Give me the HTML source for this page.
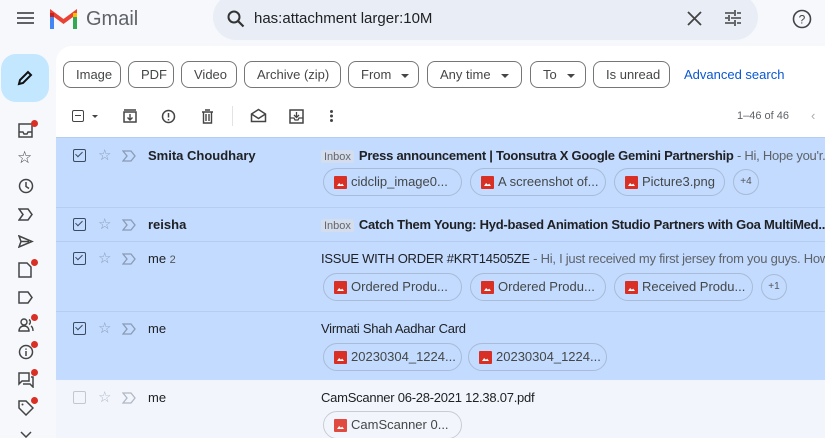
<!DOCTYPE html>
<html><head><meta charset="utf-8">
<style>
*{margin:0;padding:0;box-sizing:border-box}
body{width:825px;height:438px;overflow:hidden;background:#f6f8fc;font-family:"Liberation Sans",Arial,sans-serif;position:relative;color:#202124}
.a{position:absolute}
.chip{position:absolute;top:61px;height:27px;border:1px solid #747775;border-radius:8px;font-size:13px;color:#444746;line-height:25px;padding:0 12px;background:#fff;white-space:nowrap}
.chip .dd{display:inline-block;width:0;height:0;border-left:4px solid transparent;border-right:4px solid transparent;border-top:4px solid #444746;margin-left:10px;vertical-align:middle}
.row{position:absolute;left:56px;width:769px;background:#c2dbff;border-top:1px solid #b5cdf0;overflow:hidden}
.cb{position:absolute;left:17px;width:13px;height:13px;border:1.6px solid #3c4a5e;border-radius:2px}
.cb.on::after{content:"";position:absolute;left:3px;top:0px;width:3px;height:6px;border:solid #3c4a5e;border-width:0 1.5px 1.5px 0;transform:rotate(45deg)}
.star{position:absolute;left:42px;font-size:15px;color:#8a9bb5}
.imp{position:absolute;left:66px}
.snd{position:absolute;left:92px;font-size:13px}
.sub{position:absolute;left:265px;width:504px;overflow:hidden;font-size:13px;letter-spacing:-0.25px;white-space:nowrap}
.inb{color:#666;font-size:11px;padding:1px 3px;border-radius:3px;margin-right:5px;background:#d3dded;letter-spacing:0}
.att{position:absolute;height:28px;border:1px solid #a9bbd6;border-radius:14px;font-size:13px;color:#444746;line-height:26px;padding-left:27px;white-space:nowrap}
.att i{position:absolute;left:10px;top:7px;width:13px;height:13px;background:#d93025;border-radius:1px}
.att i::after{content:"";position:absolute;left:3px;bottom:3px;width:7px;height:3px;background:#fff;clip-path:polygon(0 100%,30% 0,55% 60%,75% 20%,100% 100%)}
.plus{position:absolute;width:26px;height:26px;border:1px solid #a9bbd6;border-radius:50%;font-size:10px;color:#555;text-align:center;line-height:24px}
.dot{position:absolute;width:7px;height:7px;background:#d93025;border-radius:50%}
.si{position:absolute;left:18px}
</style></head><body>
<div class="a" style="left:17px;top:12px;width:17px;height:2px;background:#5f6368;box-shadow:0 5px 0 #5f6368,0 10px 0 #5f6368"></div>
<svg class="a" style="left:50px;top:9px" width="27" height="20" viewBox="0 0 27 20"><path d="M2 20V4l11.5 8.5L25 4v16" fill="none" stroke="#ea4335" stroke-width="4"/><path d="M2 4v16" stroke="#4285f4" stroke-width="4"/><path d="M25 4v16" stroke="#34a853" stroke-width="4"/><path d="M25 4l0 4" stroke="#fbbc04" stroke-width="4"/><path d="M2 4l0 4" stroke="#c5221f" stroke-width="4"/></svg>
<div class="a" style="left:86px;top:8px;font-size:20px;color:#5f6368">Gmail</div>
<div class="a" style="left:213px;top:-6px;width:545px;height:46px;background:#e9eef6;border-radius:24px"></div>
<svg class="a" style="left:227px;top:10px" width="18" height="18" viewBox="0 0 18 18"><circle cx="7" cy="7" r="5.5" fill="none" stroke="#333" stroke-width="2"/><path d="M11 11l5.5 5.5" stroke="#333" stroke-width="2.2"/></svg>
<div class="a" style="left:254px;top:10px;font-size:15px;color:#202124">has:attachment larger:10M</div>
<svg class="a" style="left:687px;top:11px" width="15" height="15"><path d="M1 1l13 13M14 1L1 14" stroke="#444" stroke-width="1.8"/></svg>
<svg class="a" style="left:724px;top:10px" width="18" height="16"><path d="M1 3h9M13 3h4M1 8h3M7 8h10M1 13h9M13 13h4M11 0v6M5 5v6M11 10v6" stroke="#444" stroke-width="1.6"/></svg>
<svg class="a" style="left:792px;top:9px" width="20" height="20"><circle cx="10" cy="10" r="8.5" fill="none" stroke="#444" stroke-width="1.6"/><text x="10" y="14.5" font-size="12" text-anchor="middle" fill="#444" font-family="Liberation Sans">?</text></svg>
<div class="a" style="left:1px;top:54px;width:48px;height:48px;background:#c2e7ff;border-radius:15px"></div>
<svg class="a" style="left:17px;top:70px" width="16" height="16"><path d="M2 14l1-4 8-8 3 3-8 8z" fill="none" stroke="#111" stroke-width="2"/></svg>
<div class="a" style="left:56px;top:46px;width:769px;height:392px;background:#fff;border-radius:16px 0 0 0"></div>
<div class="chip" style="left:63px;width:58px">Image</div>
<div class="chip" style="left:128px;width:46px">PDF</div>
<div class="chip" style="left:181px;width:56px">Video</div>
<div class="chip" style="left:244px;width:97px">Archive (zip)</div>
<div class="chip" style="left:348px;width:71px">From<span class="dd"></span></div>
<div class="chip" style="left:427px;width:95px">Any time<span class="dd"></span></div>
<div class="chip" style="left:530px;width:56px">To<span class="dd"></span></div>
<div class="chip" style="left:593px;width:77px">Is unread</div>
<div class="a" style="left:684px;top:67px;font-size:13px;color:#0b57d0">Advanced search</div>
<div class="a" style="left:72px;top:110px;width:12px;height:12px;border:1.5px solid #444;border-radius:2px"><div style="margin:3.5px 2px;height:1.5px;background:#444"></div></div>
<div class="a" style="left:92px;top:115px;border-left:3px solid transparent;border-right:3px solid transparent;border-top:3px solid #444"></div>
<svg class="a" style="left:123px;top:109px" width="14" height="14"><rect x="1" y="3" width="12" height="10" fill="none" stroke="#444" stroke-width="1.5"/><path d="M1 1h12M7 5v6M4.5 8.5L7 11l2.5-2.5" stroke="#444" stroke-width="1.4" fill="none"/></svg>
<svg class="a" style="left:161px;top:109px" width="15" height="15"><circle cx="7.5" cy="7.5" r="6" fill="none" stroke="#444" stroke-width="1.5"/><path d="M7.5 4v4.5M7.5 10v1.5" stroke="#444" stroke-width="1.5"/></svg>
<svg class="a" style="left:201px;top:109px" width="13" height="15"><path d="M1 3h11M4 1h5M2.5 3v11h8V3M5 5v7M8 5v7" stroke="#444" stroke-width="1.4" fill="none"/></svg>
<div class="a" style="left:232px;top:106px;width:1px;height:20px;background:#e3e3e3"></div>
<svg class="a" style="left:250px;top:108px" width="17" height="15"><path d="M1.5 6l7-4.5 7 4.5v7.5h-14zM1.5 6l7 4.5 7-4.5" fill="none" stroke="#444" stroke-width="1.5"/></svg>
<svg class="a" style="left:289px;top:109px" width="15" height="15"><rect x="1" y="1" width="13" height="13" fill="none" stroke="#444" stroke-width="1.5"/><path d="M1 9h4l1 2h3l1-2h4M7.5 3v5M5 6l2.5 2.5L10 6" stroke="#444" stroke-width="1.3" fill="none"/></svg>
<div class="a" style="left:330px;top:110px;width:3px;height:3px;background:#444;border-radius:50%;box-shadow:0 4.5px 0 #444,0 9px 0 #444"></div>
<div class="a" style="left:737px;top:110px;font-size:11px;color:#5f6368">1–46 of 46</div>
<div class="a" style="left:811px;top:108px;font-size:13px;color:#aaa">‹</div>
<div class="row" style="top:137px;height:70px">
 <div class="cb on" style="top:11px"></div><div class="star" style="top:8px">☆</div>
 <svg class="imp" style="top:12px" width="14" height="12"><path d="M1 1h8l4 5-4 5H1l4-5z" fill="none" stroke="#8a9bb5" stroke-width="1.3"/></svg>
 <div class="snd" style="top:10px;font-weight:bold">Smita Choudhary</div>
 <div class="sub" style="top:10px"><span class="inb">Inbox</span><b>Press announcement | Toonsutra X Google Gemini Partnership</b> <span style="color:#5f6368">- Hi, Hope you'r...</span></div>
 <div class="att" style="left:267px;top:30px;width:139px"><i></i>cidclip_image0...</div>
 <div class="att" style="left:414px;top:30px;width:136px"><i></i>A screenshot of...</div>
 <div class="att" style="left:558px;top:30px;width:111px"><i></i>Picture3.png</div>
 <div class="plus" style="left:677px;top:31px">+4</div>
</div>
<div class="row" style="top:207px;height:34px">
 <div class="cb on" style="top:10px"></div><div class="star" style="top:7px">☆</div>
 <svg class="imp" style="top:11px" width="14" height="12"><path d="M1 1h8l4 5-4 5H1l4-5z" fill="none" stroke="#8a9bb5" stroke-width="1.3"/></svg>
 <div class="snd" style="top:9px;font-weight:bold">reisha</div>
 <div class="sub" style="top:9px"><span class="inb">Inbox</span><b>Catch Them Young: Hyd-based Animation Studio Partners with Goa MultiMed...</b></div>
</div>
<div class="row" style="top:241px;height:70px">
 <div class="cb on" style="top:10px"></div><div class="star" style="top:7px">☆</div>
 <svg class="imp" style="top:11px" width="14" height="12"><path d="M1 1h8l4 5-4 5H1l4-5z" fill="none" stroke="#8a9bb5" stroke-width="1.3"/></svg>
 <div class="snd" style="top:9px">me <span style="font-size:11px;color:#555">2</span></div>
 <div class="sub" style="top:9px">ISSUE WITH ORDER #KRT14505ZE <span style="color:#5f6368">- Hi, I just received my first jersey from you guys. Howe...</span></div>
 <div class="att" style="left:267px;top:31px;width:139px"><i></i>Ordered Produ...</div>
 <div class="att" style="left:414px;top:31px;width:136px"><i></i>Ordered Produ...</div>
 <div class="att" style="left:558px;top:31px;width:139px"><i></i>Received Produ...</div>
 <div class="plus" style="left:705px;top:32px">+1</div>
</div>
<div class="row" style="top:311px;height:69px">
 <div class="cb on" style="top:10px"></div><div class="star" style="top:7px">☆</div>
 <svg class="imp" style="top:11px" width="14" height="12"><path d="M1 1h8l4 5-4 5H1l4-5z" fill="none" stroke="#8a9bb5" stroke-width="1.3"/></svg>
 <div class="snd" style="top:9px">me</div>
 <div class="sub" style="top:9px">Virmati Shah Aadhar Card</div>
 <div class="att" style="left:267px;top:31px;width:139px"><i></i>20230304_1224...</div>
 <div class="att" style="left:412px;top:31px;width:139px"><i></i>20230304_1224...</div>
</div>
<div class="row" style="top:380px;height:58px;background:#f2f6fc;border-top:none">
 <div class="cb" style="top:11px;border-color:#c4c7cc"></div><div class="star" style="top:8px;color:#b0b8c4">☆</div>
 <svg class="imp" style="top:12px" width="14" height="12"><path d="M1 1h8l4 5-4 5H1l4-5z" fill="none" stroke="#b0b8c4" stroke-width="1.3"/></svg>
 <div class="snd" style="top:10px">me</div>
 <div class="sub" style="top:10px">CamScanner 06-28-2021 12.38.07.pdf</div>
 <div class="att" style="left:267px;top:31px;width:139px;border-color:#c8cdd4"><i style="background:#e04a3f"></i>CamScanner 0...</div>
</div>
<svg class="si" style="top:123px" width="16" height="15"><rect x="1" y="1" width="13" height="13" fill="none" stroke="#444" stroke-width="1.5"/><path d="M1 9h4l1 2h3l1-2h4" stroke="#444" stroke-width="1.4" fill="none"/></svg><div class="dot" style="left:31px;top:120px"></div>
<div class="a" style="left:17px;top:148px;font-size:17px;color:#444">☆</div>
<svg class="si" style="top:178px" width="16" height="16"><circle cx="8" cy="8" r="6.5" fill="none" stroke="#444" stroke-width="1.5"/><path d="M8 4v4.5l3 2" stroke="#444" stroke-width="1.5" fill="none"/></svg>
<svg class="si" style="top:208px" width="16" height="13"><path d="M1 1h9l4 5.5-4 5.5H1l4-5.5z" fill="none" stroke="#444" stroke-width="1.5"/></svg>
<svg class="si" style="top:235px" width="16" height="13"><path d="M1 1l13 5.5L1 12l2-5.5zM3 6.5h8" fill="none" stroke="#444" stroke-width="1.5"/></svg>
<svg class="si" style="top:262px" width="14" height="16"><path d="M1 1h8l4 4v10H1z" fill="none" stroke="#444" stroke-width="1.5"/></svg><div class="dot" style="left:31px;top:259px"></div>
<svg class="si" style="top:291px" width="16" height="13"><path d="M1 1h9l4 5.5-4 5.5H1z" fill="none" stroke="#444" stroke-width="1.5"/></svg>
<svg class="si" style="top:318px" width="16" height="14"><circle cx="6" cy="4" r="3" fill="none" stroke="#444" stroke-width="1.4"/><path d="M1 13c0-3 2-5 5-5s5 2 5 5zM11 1.5a3 3 0 010 5M13 8c1.5 1 2 3 2 5" fill="none" stroke="#444" stroke-width="1.4"/></svg><div class="dot" style="left:31px;top:314px"></div>
<svg class="si" style="top:344px" width="16" height="16"><circle cx="8" cy="8" r="6.5" fill="none" stroke="#444" stroke-width="1.5"/><path d="M8 7v5M8 4.5v1.2" stroke="#444" stroke-width="1.5"/></svg><div class="dot" style="left:31px;top:341px"></div>
<svg class="si" style="top:372px" width="16" height="16"><path d="M1 1h10v8H4l-3 3zM5 12h7l3 3V5h-2" fill="none" stroke="#444" stroke-width="1.5"/></svg><div class="dot" style="left:31px;top:369px"></div>
<svg class="si" style="top:400px" width="16" height="16"><path d="M1 1h7l7 7-7 7-7-7z" fill="none" stroke="#444" stroke-width="1.5"/><circle cx="4.5" cy="4.5" r="1" fill="#444"/></svg><div class="dot" style="left:31px;top:397px"></div>
<svg class="si" style="top:431px;left:20px" width="12" height="7"><path d="M1 1l5 5 5-5" fill="none" stroke="#444" stroke-width="1.5"/></svg>
</body></html>
